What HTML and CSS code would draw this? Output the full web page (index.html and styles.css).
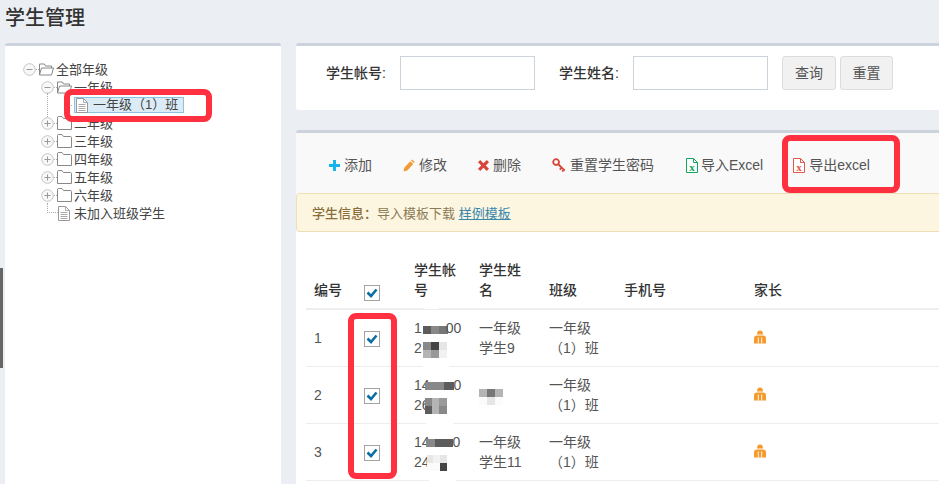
FILE: index.html
```html
<!DOCTYPE html>
<html lang="zh">
<head>
<meta charset="utf-8">
<title>学生管理</title>
<link rel="stylesheet" href="styles.css">
</head>
<body>
<svg class="defs" width="0" height="0" aria-hidden="true">
  <symbol id="minus" viewBox="0 0 13 13"><circle cx="6.5" cy="6.5" r="5.8" fill="#f8f8f8" stroke="#c4c4c4"/><path d="M3.5 6.5h6" stroke="#999"/></symbol>
  <symbol id="plus" viewBox="0 0 13 13"><circle cx="6.5" cy="6.5" r="5.8" fill="#f8f8f8" stroke="#c4c4c4"/><path d="M3.5 6.5h6M6.5 3.5v6" stroke="#999"/></symbol>
  <symbol id="open" viewBox="0 0 15 13"><path d="M.5 12.5V1.5h5l1 2h6v2M.5 12.5h12l2-7H2.500z" fill="#fff" stroke="#888"/></symbol>
  <symbol id="closed" viewBox="0 0 15 14"><path d="M.5 13.5V1.500q0-1 1-1h3.500l1.500 2h7q1 0 1 1v10z" fill="#fff" stroke="#888"/></symbol>
  <symbol id="doc" viewBox="0 0 12 15"><path d="M.5.5h7l4 4v10H.5z" fill="#fff" stroke="#999"/><path d="M7.500.5v4h4M2.500 6.500h7M2.500 8.500h7M2.500 10.500h7M2.500 12.500h7" fill="none" stroke="#aaa"/></symbol>
  <symbol id="check" viewBox="0 0 16 16"><rect x=".5" y=".5" width="15" height="15" fill="#fff" stroke="#a3a3a3"/><path d="M3.500 7.500l3.500 3.500 5.500-6.500" fill="none" stroke="#0a6ea5" stroke-width="2.600"/></symbol>
  <symbol id="parent" viewBox="0 0 12 14"><path d="M3 4.500Q3 .5 6 .5T9 4.500z" fill="#f59a2d"/><path d="M0 13.500V8.500q0-3 3-3h6q3 0 3 3v5z" fill="#f59a2d"/><path d="M4.300 7.500v6M7.700 7.500v6" stroke="#fff" stroke-width=".9"/></symbol>
</svg>

<div class="handle"></div>

<h1 class="title">学生管理</h1>

<div class="columns">
  <aside class="panel side">
    <ul class="tree">
      <li class="node root"><svg class="sw"><use href="#minus"/></svg><i class="dash"></i><svg class="fold"><use href="#open"/></svg><span>全部年级</span></li>
      <li class="node lv2"><svg class="sw"><use href="#minus"/></svg><i class="dash"></i><svg class="fold"><use href="#open"/></svg><span>一年级</span></li>
      <li class="node leaf"><i class="dash long"></i><span class="sel"><svg class="doc"><use href="#doc"/></svg>一年级（1）班</span></li>
      <li class="node lv2"><svg class="sw"><use href="#plus"/></svg><i class="dash"></i><svg class="fold"><use href="#closed"/></svg><span>二年级</span></li>
      <li class="node lv2"><svg class="sw"><use href="#plus"/></svg><i class="dash"></i><svg class="fold"><use href="#closed"/></svg><span>三年级</span></li>
      <li class="node lv2"><svg class="sw"><use href="#plus"/></svg><i class="dash"></i><svg class="fold"><use href="#closed"/></svg><span>四年级</span></li>
      <li class="node lv2"><svg class="sw"><use href="#plus"/></svg><i class="dash"></i><svg class="fold"><use href="#closed"/></svg><span>五年级</span></li>
      <li class="node lv2"><svg class="sw"><use href="#plus"/></svg><i class="dash"></i><svg class="fold"><use href="#closed"/></svg><span>六年级</span></li>
      <li class="node lv2 last"><i class="elbow"></i><svg class="doc"><use href="#doc"/></svg><span>未加入班级学生</span></li>
    </ul>
  </aside>

  <main class="main">
    <section class="panel search">
      <label class="lab" for="acc">学生帐号:</label>
      <input class="inp" id="acc" type="text">
      <label class="lab second" for="nm">学生姓名:</label>
      <input class="inp" id="nm" type="text">
      <button class="btn first" type="button">查询</button>
      <button class="btn" type="button">重置</button>
    </section>

    <section class="panel list">
      <div class="toolbar">
        <a class="tool t-add"><svg class="ic" viewBox="0 0 12 12"><path d="M6 0v12M0 6h12" stroke="#13b5ea" stroke-width="3.200"/></svg>添加</a>
        <a class="tool t-edit"><svg class="ic pen" viewBox="0 0 12 13"><path d="M.5 12.500l.8-3.800 6-6.500 3 2.800-6 6.500z" fill="#f39a35"/><path d="M8 1.500l1-1 2.800 2.600-1 1z" fill="#f39a35"/></svg>修改</a>
        <a class="tool t-del"><svg class="ic" viewBox="0 0 10 10"><path d="M1 1l8 8M9 1l-8 8" stroke="#d9453a" stroke-width="2.800"/></svg>删除</a>
        <a class="tool t-key"><svg class="ic wide" viewBox="0 0 13 13"><circle cx="3.800" cy="3.800" r="2.700" fill="none" stroke="#d9453a" stroke-width="1.700"/><path d="M5.800 5.800l6 6M9 9l-1.800 1.800M11 11l-1.500 1.500" stroke="#d9453a" stroke-width="1.700"/></svg>重置学生密码</a>
        <a class="tool t-in"><svg class="ic xl" viewBox="0 0 12 15"><path d="M.5.500h7l4 4v10H.5z" fill="#fff" stroke="#12a55c"/><path d="M7.500.500v4h4" fill="none" stroke="#12a55c"/><text x="6" y="12.500" class="xt xg">x</text></svg>导入Excel</a>
        <a class="tool t-out"><svg class="ic xl" viewBox="0 0 12 15"><path d="M.5.500h7l4 4v10H.5z" fill="#fff" stroke="#e2574c"/><path d="M7.500.500v4h4" fill="none" stroke="#e2574c"/><text x="6" y="12.500" class="xt xr">x</text></svg>导出excel</a>
      </div>
      <div class="alert"><b>学生信息：</b>导入模板下载 <a class="link">样例模板</a></div>

      <table class="grid">
        <colgroup><col class="c1"><col class="c2"><col class="c3"><col class="c4"><col class="c5"><col class="c6"><col class="c7"></colgroup>
        <thead>
          <tr><th>编号</th><th><svg class="cb"><use href="#check"/></svg></th><th>学生帐号</th><th>学生姓名</th><th>班级</th><th>手机号</th><th>家长</th></tr>
        </thead>
        <tbody>
          <tr>
            <td>1</td><td><svg class="cb mid"><use href="#check"/></svg></td>
            <td class="nw">1<span class="mos r1 m1"><i class="a"></i><i class="b"></i><i class="c"></i></span>00<br>2<span class="mos r2 m2"><i class="b"></i><i class="d"></i><i class="f"></i><i class="e"></i><i class="g"></i><i class="h"></i></span></td>
            <td>一年级<br>学生9</td><td>一年级<br>（1）班</td><td></td><td><svg class="par"><use href="#parent"/></svg></td>
          </tr>
          <tr>
            <td>2</td><td><svg class="cb mid"><use href="#check"/></svg></td>
            <td class="nw">14<span class="mos r1 m3"><i class="b"></i><i class="b"></i><i class="a"></i></span>0<br>26<span class="mos r2 m4"><i class="b"></i><i class="e"></i><i class="g"></i><i class="a"></i><i class="e"></i><i class="b"></i></span></td>
            <td><span class="mos r2 name"><i class="e"></i><i class="c"></i><i class="e"></i><i class="z"></i><i class="f"></i><i class="z"></i></span></td><td>一年级<br>（1）班</td><td></td><td><svg class="par"><use href="#parent"/></svg></td>
          </tr>
          <tr>
            <td>3</td><td><svg class="cb mid"><use href="#check"/></svg></td>
            <td class="nw">14<span class="mos r1 m5"><i class="b"></i><i class="a"></i><i class="a"></i></span>0<br>24<span class="mos r2 m6"><i class="f"></i><i class="h"></i><i class="f"></i><i class="z"></i><i class="z"></i><i class="d"></i></span></td>
            <td>一年级<br>学生11</td><td>一年级<br>（1）班</td><td></td><td><svg class="par"><use href="#parent"/></svg></td>
          </tr>
        </tbody>
      </table>
    </section>
  </main>
</div>

<div class="patch p1"></div>
<div class="patch p2"></div>
<div class="patch p3"></div>
<div class="patch p4"></div>

<div class="mark mark-tree"></div>
<div class="mark mark-export"></div>
<div class="mark mark-check"></div>
</body>
</html>
```

FILE: styles.css
```css
* { box-sizing: border-box; }
html, body { margin: 0; height: 484px; overflow: hidden; }
body {
  position: relative;
  background: #ebeef2;
  color: #555;
  font: 14px/20px "Liberation Sans", "Noto Sans CJK SC", sans-serif;
}
.defs { position: absolute; }
.handle { position: absolute; left: 0; top: 268px; width: 3px; height: 100px; background: #666; }
.title { margin: 0; height: 43px; padding: 4px 0 0 5px; font-size: 20px; line-height: 28px; font-weight: 500; color: #333; }

.columns { display: flex; padding-left: 5px; gap: 15px; }
.panel { background: #fff; border-top: 3px solid #cdd3dc; border-radius: 3px 3px 0 0; }
.side { width: 276px; height: 441px; flex: none; }
.main { flex: none; width: 660px; }

/* tree */
.tree { list-style: none; margin: 0; padding: 14px 0 0 18px; font-size: 13px; }
.node { display: flex; align-items: center; height: 18px; position: relative; color: #444; }
.node > span { padding-top: 1px; }
.lv2 { padding-left: 18px; }
.leaf { padding-left: 43px; }
.sw { width: 13px; height: 13px; flex: none; }
.dash { width: 3px; flex: none; border-top: 1px dotted #aaa; }
.fold { width: 15px; height: 14px; flex: none; margin: 0 2px 0 0; }
.doc { width: 12px; height: 15px; flex: none; }
.dash.long { width: 6px; margin-right: 2px; }
.leaf::before { content: ""; position: absolute; left: 24px; top: -3px; height: 24px; border-left: 1px dotted #aaa; }
.node > .sel { display: flex; align-items: center; gap: 5px; width: 110px; height: 16px; padding: 0 0 0 1px; background: #dcecf6; border: 1px solid #8fc3dd; white-space: nowrap; color: #444; }
.elbow { width: 11px; height: 10px; margin: -10px 0 0 6px; flex: none; border-left: 1px dotted #aaa; border-bottom: 1px dotted #aaa; }
.last .doc { margin: 0 4px 0 0; }

/* search */
.search { display: flex; align-items: flex-start; height: 67px; padding: 10px 0 0 30px; border-radius: 3px; }
.lab { line-height: 34px; font-weight: 500; color: #333; width: 74px; flex: none; }
.second { margin-left: 24px; }
.inp { width: 135px; height: 34px; flex: none; background: #fff; border: 1px solid #cdd3dc; padding: 0 6px; }
.btn { height: 34px; width: 53px; flex: none; margin-left: 4px; padding: 0; background: #f1f1f1; border: 1px solid #dcdcdc; border-radius: 3px; color: #555; font: inherit; }
.first { margin-left: 14px; width: 54px; }

/* list */
.list { margin-top: 20px; height: 354px; }
.toolbar { display: flex; align-items: center; height: 60px; background: #f9f9f9; padding: 4px 0 0 33px; }
.tool { display: flex; align-items: center; gap: 4px; white-space: nowrap; color: #555; }
.ic { width: 11px; height: 11px; flex: none; }
.ic.pen { width: 12px; height: 13px; }
.ic.wide { width: 14px; height: 14px; }
.ic.xl { width: 12px; height: 15px; }
.t-edit, .t-del, .t-key { margin-left: 31px; }
.t-in { margin-left: 32px; gap: 3px; }
.t-out { margin-left: 30px; }
.xt { font: 700 11px "Liberation Serif", serif; text-anchor: middle; }
.xg { fill: #12a55c; }
.xr { fill: #e2574c; }

.alert { height: 39px; padding: 0 15px; line-height: 39px; background: #fcf6e1; border: 1px solid #f0dfb6; border-radius: 3px; color: #8d7a56; font-size: 13px; }
.alert b { font-weight: 500; color: #8a6d3b; }
.link { color: #3a87ad; text-decoration: underline; }

/* table */
.grid { table-layout: fixed; width: 633px; margin: 20px 0 0 10px; border-collapse: collapse; }
.c1 { width: 50px; }
.c2 { width: 50px; }
.c3 { width: 65px; }
.c4 { width: 70px; }
.c5 { width: 75px; }
.c6 { width: 130px; }
.grid th, .grid td { padding: 8px 10px 8px 8px; text-align: left; }
.grid th { vertical-align: bottom; font-weight: 500; border-bottom: 2px solid #eee; color: #333; }
.grid td { vertical-align: middle; border-bottom: 1px solid #eee; height: 57px; color: #555; }
.nw { white-space: nowrap; }
.cb { display: block; width: 16px; height: 16px; }
.grid th .cb { margin-bottom: -1px; }
.cb.mid { margin-top: 2px; }
.par { display: block; width: 12px; height: 14px; margin-top: -3px; }

.mos { display: inline-grid; vertical-align: top; grid-auto-rows: 8px; grid-template-columns: repeat(3, 1fr); }
.mos i { display: block; }
.r1 { margin-top: 7px; }
.r2 { margin-top: 3px; }
.m1 { width: 25px; margin: 8px -2px 0 1px; }
.m2 { width: 24px; margin: 4px 0 0 1px; }
.m3 { width: 29px; margin-left: -5px; }
.m4 { width: 22px; margin-left: -5px; }
.m5 { width: 27px; margin-left: -4px; }
.m6 { width: 20px; margin-left: -3px; }
.name { display: grid; width: 24px; margin: 3px 0 0; }
.a { background: #5c5c5c; }
.b { background: #888; }
.c { background: #777; }
.d { background: #444; }
.e { background: #b4b4b4; }
.f { background: #e6e6e6; }
.g { background: #999; }
.h { background: #f2f2f2; }
.z { background: #fbfbfb; }

/* white smudges left over the row rules by the redaction */
.patch { position: absolute; background: #fff; height: 4px; }
.p1 { left: 424px; top: 305px; width: 15px; }
.p2 { left: 423px; top: 364px; width: 26px; }
.p3 { left: 426px; top: 421px; width: 27px; }
.p4 { left: 429px; top: 478px; width: 27px; height: 6px; }

/* annotation frames */
.mark { position: absolute; border: 6px solid #ff3040; border-radius: 8px; }
.mark-tree { left: 64px; top: 89px; width: 148px; height: 33px; }
.mark-export { left: 782px; top: 135px; width: 118px; height: 58px; }
.mark-check { left: 348px; top: 313px; width: 49px; height: 166px; }
```
